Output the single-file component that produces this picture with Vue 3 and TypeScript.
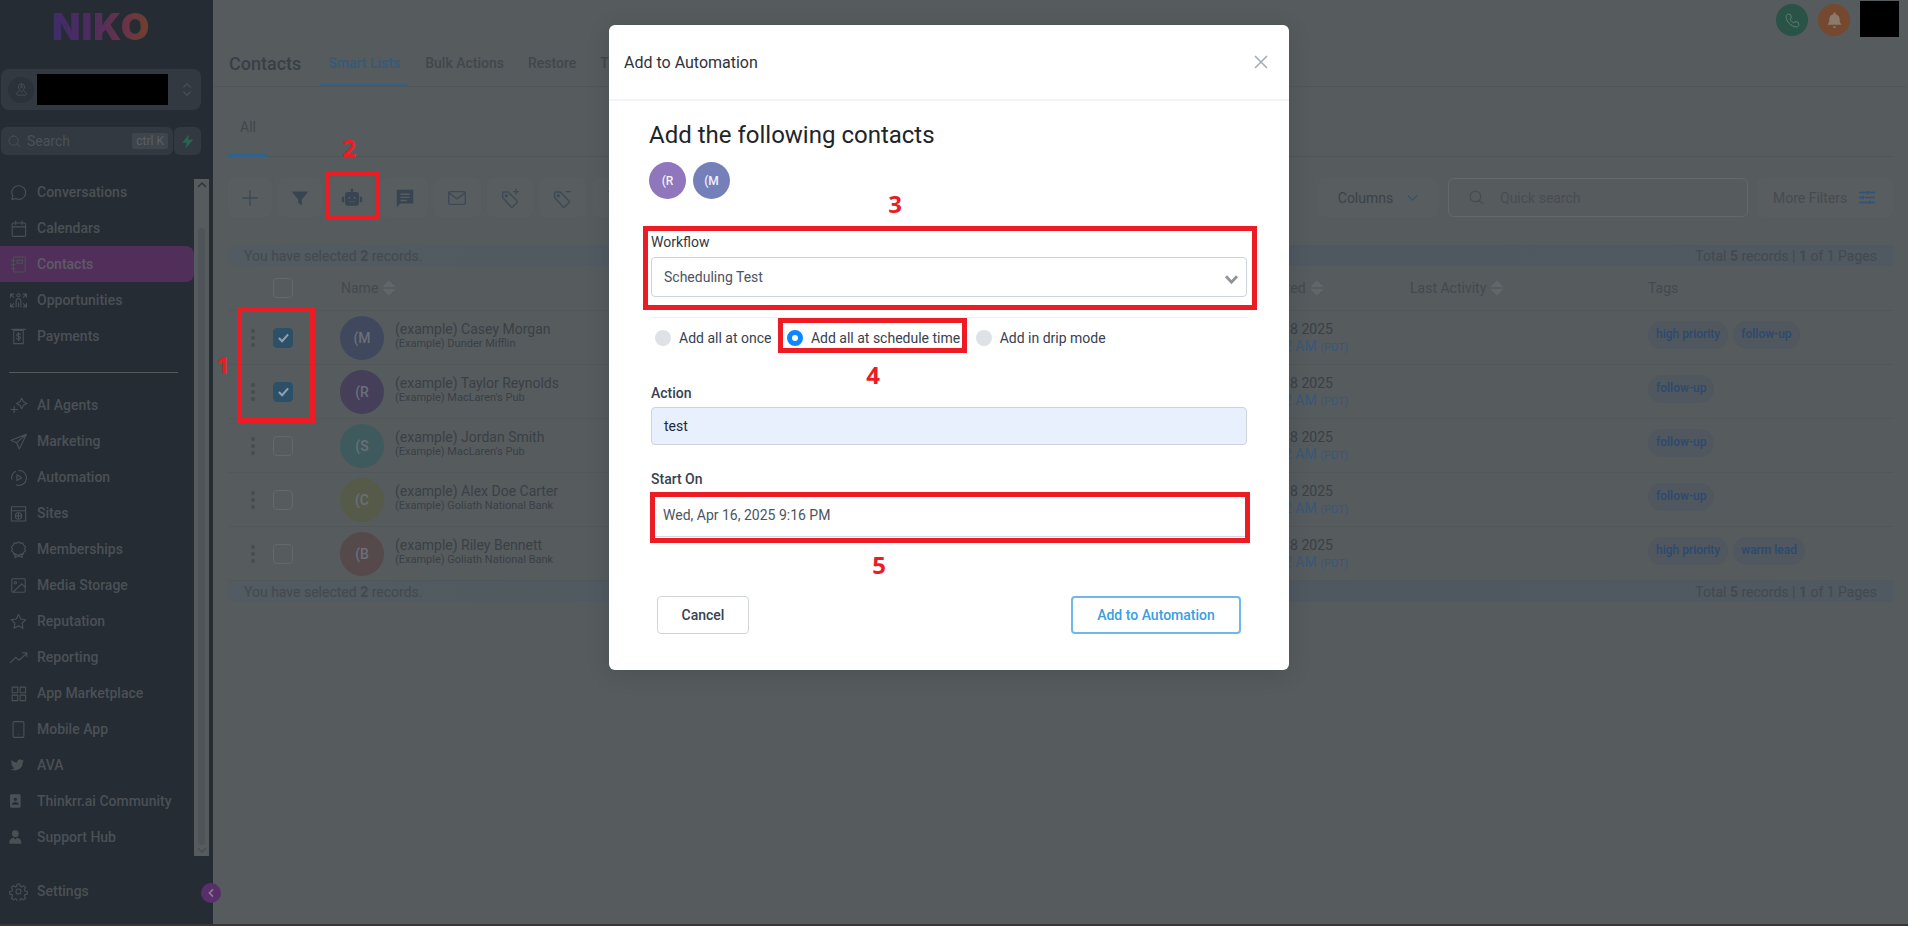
<script setup lang="ts">
type NavItem = { label: string; d: string; filled?: boolean; active?: boolean };

const navTop: NavItem[] = [
  { label: 'Conversations', d: 'M12.5 3.5a8.5 8.5 0 1 1-3.9 16L3.5 21l1.3-4.6A8.5 8.5 0 0 1 12.5 3.5z' },
  { label: 'Calendars', d: 'M5.5 5h14a1.5 1.5 0 0 1 1.5 1.5v14a1.5 1.5 0 0 1-1.5 1.5h-14A1.5 1.5 0 0 1 4 20.500v-14A1.500 1.500 0 0 1 5.500 5zM4 10h17M8.500 2.500V7M16.500 2.500V7' },
  { label: 'Contacts', active: true, d: 'M7 2.500h12a1.500 1.500 0 0 1 1.500 1.500v16a1.500 1.500 0 0 1-1.500 1.500H7A1.500 1.500 0 0 1 5.500 20V4A1.500 1.500 0 0 1 7 2.500zM3.500 7h4M3.500 12h4M3.500 17h4M10 6.500h7v4h-7z' },
  { label: 'Opportunities', d: 'M12 3.500a2 2 0 1 1 0 4 2 2 0 0 1 0-4zM9 20v-7.500a3 3 0 0 1 6 0V20M12 15v5M2 8V4h4M22 8V4h-4M2 16v4h4M22 16v4h-4M2.500 4.500 6 8M21.500 4.500 18 8M2.500 19.500 6 16M21.500 19.500 18 16' },
  { label: 'Payments', d: 'M6 4.500h12V21H6zM3.500 3h17M14.500 9.500c-.5-1-1.500-1.300-2.500-1.300-1.300 0-2.300.7-2.300 1.800 0 2.500 4.800 1.200 4.800 3.800 0 1.100-1.100 1.800-2.500 1.800-1.100 0-2.100-.4-2.600-1.400M12 7v10' },
];

const navMain: NavItem[] = [
  { label: 'AI Agents', d: 'M16 3l2.200 4.300L22.500 9.500l-4.300 2.200L16 16l-2.200-4.300L9.500 9.500l4.300-2.200zM6.500 13v8M2.500 17h8' },
  { label: 'Marketing', d: 'M22 3 2.500 10.500l7 3L13 21.500zM22 3 9.500 13.500' },
  { label: 'Automation', d: 'M12.500 3a9.500 9.500 0 1 1-3 18.500M3.500 14A9.500 9.500 0 0 1 8 4.500M10 8.500l6 3.700-6 3.700z' },
  { label: 'Sites', d: 'M3 3.500h18v18H3zM3 8.500h18M12 11a4 4 0 1 1 0 8 4 4 0 0 1 0-8zM8 15h8M12 11v8' },
  { label: 'Memberships', d: 'M12 2.500l2.500 1.500 3-.2 1 2.700 2.300 1.800-1 2.800 1 2.800-2.300 1.800-1 2.700-3-.2-2.500 1.500-2.500-1.500-3 .2-1-2.700-2.300-1.800 1-2.800-1-2.800 2.300-1.800 1-2.700 3 .2zM7.500 17v5l4.500-2 4.500 2v-5' },
  { label: 'Media Storage', d: 'M5 3.500h14A1.500 1.500 0 0 1 20.500 5v14a1.500 1.500 0 0 1-1.500 1.500H5A1.500 1.500 0 0 1 3.500 19V5A1.500 1.500 0 0 1 5 3.500zM8 7a1.500 1.500 0 1 1 0 3 1.500 1.500 0 0 1 0-3zM20.500 14.500 16 10 5 20.500' },
  { label: 'Reputation', d: 'M12 3l2.800 5.900 6.400.8-4.700 4.500 1.200 6.400-5.700-3.100-5.700 3.100 1.200-6.400L2.800 9.700l6.400-.8z' },
  { label: 'Reporting', d: 'M1.500 18.500l7-6.500 4.500 3.500 9.500-9M17 6h5.500v5' },
  { label: 'App Marketplace', d: 'M4 4h7v7H4zM14 4h7v7h-7zM4 14h7v7H4zM14 14h7v7h-7z' },
  { label: 'Mobile App', d: 'M7 2h10a1.800 1.800 0 0 1 1.800 1.800v16.400A1.800 1.800 0 0 1 17 22H7a1.800 1.800 0 0 1-1.800-1.800V3.800A1.800 1.800 0 0 1 7 2zM12 18h.1' },
  { label: 'AVA', filled: true, d: 'M24 5.500c-.8.400-1.500.6-2.400.7.900-.5 1.500-1.300 1.800-2.300-.8.500-1.700.8-2.600 1a4.100 4.100 0 0 0-7 3.700A11.600 11.600 0 0 1 5.300 4.400c-1.100 1.900-.5 4.300 1.300 5.500-.7 0-1.300-.2-1.900-.5 0 2 1.400 3.700 3.300 4.100-.6.200-1.200.2-1.800.1.500 1.600 2 2.800 3.800 2.800A8.300 8.300 0 0 1 4 18.100 11.600 11.600 0 0 0 21.900 8c.8-.6 1.500-1.500 2.100-2.500z' },
  { label: 'Thinkrr.ai Community', filled: true, d: 'M5 2h12a2 2 0 0 1 2 2v16a2 2 0 0 1-2 2H5a2 2 0 0 1-2-2V4a2 2 0 0 1 2-2zm6 5a2.500 2.500 0 1 0 0 5 2.500 2.500 0 0 0 0-5zm-5 10.500h10c0-2.500-2.500-4-5-4s-5 1.500-5 4z' },
  { label: 'Support Hub', filled: true, d: 'M11 2a5 5 0 1 1 0 10 5 5 0 0 1 0-10zM2 20c0-3.800 3-6.500 6.500-6.900l2.500 2.700 2.500-2.700c3.500.4 6.500 3.100 6.500 6.900v2H2z' },
];

const settingsIcon = 'M12 8.800a3.200 3.200 0 1 1 0 6.400 3.200 3.200 0 0 1 0-6.400zM10.300 2.500h3.400l.6 2.900 1.800.8 2.500-1.600 2.400 2.400-1.600 2.500.8 1.800 2.900.6v3.400l-2.900.6-.8 1.800 1.600 2.500-2.400 2.400-2.500-1.600-1.800.8-.6 2.900h-3.400l-.6-2.900-1.800-.8-2.500 1.600-2.400-2.400 1.600-2.500-.8-1.800-2.900-.6v-3.400l2.900-.6.800-1.800-1.600-2.500 2.400-2.400 2.500 1.600 1.800-.8z';

const tagBody = 'M4 6.500a1 1 0 0 1 1-1h5l9.500 9.500a1.500 1.500 0 0 1 0 2.100l-4.400 4.400a1.500 1.500 0 0 1-2.100 0L4 11.500zM8 8.500a1 1 0 1 1 0 2 1 1 0 0 1 0-2z';

const toolButtons = [
  { name: 'add', width: 44, d: 'M12 4v16M4 12h16' },
  { name: 'filter', width: 44, filled: true, d: 'M3 5h18l-7 8.500V20l-4-2.500v-4z' },
  { name: 'robot', width: 47, filled: true, d: 'M11 5.500V4.300a1.500 1.500 0 1 1 2 0v1.200h3.500a3 3 0 0 1 3 3v9a3 3 0 0 1-3 3h-9a3 3 0 0 1-3-3v-9a3 3 0 0 1 3-3zM9 10.500a1.200 1.200 0 1 0 0 2.400 1.200 1.200 0 0 0 0-2.400zm6 0a1.200 1.200 0 1 0 0 2.400 1.200 1.200 0 0 0 0-2.400zM9 15.500v1h1.500v-1zm2.300 0v1h1.400v-1zm2.200 0v1H15v-1zM1 10.500h2.500v6H1zm19.500 0H23v6h-2.500z' },
  { name: 'message', width: 47, filled: true, d: 'M3 3h18v15H7l-4 4zm4 4v1.600h10V7zm0 3.500v1.600h10v-1.600zm0 3.500v1.600h7V14z' },
  { name: 'mail', width: 46.5, d: 'M4.500 5h15A1.500 1.500 0 0 1 21 6.500v11a1.500 1.500 0 0 1-1.500 1.500h-15A1.500 1.500 0 0 1 3 17.500v-11A1.500 1.500 0 0 1 4.500 5zM3.500 6.500 12 13l8.500-6.500' },
  { name: 'tag-add', width: 46.5, d: tagBody + 'M18.500 2.500v5M16 5h5' },
  { name: 'tag-remove', width: 46.5, d: tagBody + 'M16.500 5h4.500' },
  { name: 'more', width: 46.5, d: 'M5 5h14' },
];

const rows = [
  { initial: '(M', color: '#40485e', name: '(example) Casey Morgan', company: '(Example) Dunder Mifflin', checked: true, tags: ['high priority', 'follow-up'] },
  { initial: '(R', color: '#463f59', name: '(example) Taylor Reynolds', company: "(Example) MacLaren's Pub", checked: true, tags: ['follow-up'] },
  { initial: '(S', color: '#3f5a5c', name: '(example) Jordan Smith', company: "(Example) MacLaren's Pub", checked: false, tags: ['follow-up'] },
  { initial: '(C', color: '#565a49', name: '(example) Alex Doe Carter', company: '(Example) Goliath National Bank', checked: false, tags: ['follow-up'] },
  { initial: '(B', color: '#55494c', name: '(example) Riley Bennett', company: '(Example) Goliath National Bank', checked: false, tags: ['high priority', 'warm lead'] },
];

const modalContacts = [
  { initial: '(R', color: '#8f76bd' },
  { initial: '(M', color: '#7580bb' },
];

const scheduleOptions = [
  { label: 'Add all at once', selected: false },
  { label: 'Add all at schedule time', selected: true },
  { label: 'Add in drip mode', selected: false },
];

// red callouts drawn on top of the screenshot
const callouts = [
  { left: 237, top: 307, width: 78, height: 116 },
  { left: 325, top: 171, width: 55, height: 49 },
  { left: 643, top: 226, width: 614, height: 84 },
  { left: 778, top: 318, width: 189, height: 35 },
  { left: 650, top: 492, width: 600, height: 51 },
];

const calloutNumbers = [
  { n: 1, x: 223, y: 365 },
  { n: 2, x: 349, y: 148 },
  { n: 3, x: 895, y: 204 },
  { n: 4, x: 873, y: 375 },
  { n: 5, x: 879, y: 565 },
];
</script>

<template>
  <div class="page">
    <aside class="sidebar">
      <div class="logo">NIKO</div>

      <div class="location">
        <span class="location-icon">
          <svg viewBox="0 0 24 24" width="15" height="15" class="line-icon">
            <path d="M12 3a5 5 0 0 1 5 5c0 3.500-5 8-5 8s-5-4.500-5-8a5 5 0 0 1 5-5zM12 6.500a1.500 1.500 0 1 1 0 3 1.500 1.500 0 0 1 0-3zM7.500 15 4 18.500 5.500 21h13l1.500-2.500-3.500-3.500" />
          </svg>
        </span>
        <span class="redacted location-name"></span>
        <svg viewBox="0 0 12 20" width="10" height="17" class="line-icon updown">
          <path d="M2 7l4-4 4 4M2 13l4 4 4-4" />
        </svg>
      </div>

      <div class="search-row">
        <div class="search-box">
          <svg viewBox="0 0 24 24" width="15" height="15" class="line-icon">
            <path d="M10.500 3a7.500 7.500 0 1 1 0 15 7.500 7.500 0 0 1 0-15zM16 16l5 5" />
          </svg>
          <span class="search-text">Search</span>
          <span class="kbd">ctrl K</span>
        </div>
        <div class="bolt-box">
          <svg viewBox="0 0 24 24" width="16" height="19"><path d="M14 1 3 14h7l-2 9 12-14h-8z" fill="#2a6350" /></svg>
        </div>
      </div>

      <div class="nav-wrap">
        <nav class="nav">
          <a v-for="item in navTop" :key="item.label" class="nav-item" :class="{ active: item.active }">
            <svg viewBox="0 0 24 24" width="19" height="19" class="line-icon nav-icon"><path :d="item.d" /></svg>
            <span>{{ item.label }}</span>
          </a>
          <div class="nav-divider"></div>
          <a v-for="item in navMain" :key="item.label" class="nav-item">
            <svg v-if="item.filled" viewBox="0 0 24 24" width="16" height="16" class="fill-icon nav-icon small"><path :d="item.d" /></svg>
            <svg v-else viewBox="0 0 24 24" width="19" height="19" class="line-icon nav-icon"><path :d="item.d" /></svg>
            <span>{{ item.label }}</span>
          </a>
        </nav>
        <div class="scrolltrack">
          <svg viewBox="0 0 10 6" width="10" height="6"><path d="M1 5l4-4 4 4" fill="none" stroke="#2f353b" stroke-width="1.500" /></svg>
          <div class="scrollthumb"></div>
          <svg viewBox="0 0 10 6" width="10" height="6"><path d="M1 1l4 4 4-4" fill="none" stroke="#484e52" stroke-width="1.500" /></svg>
        </div>
      </div>

      <a class="nav-item settings">
        <svg viewBox="0 0 24 24" width="19" height="19" class="line-icon nav-icon"><path :d="settingsIcon" /></svg>
        <span>Settings</span>
      </a>
      <span class="collapse">
        <svg viewBox="0 0 10 12" width="8" height="10"><path d="M7.500 1.500 3 6l4.500 4.500" fill="none" stroke="#8f7a98" stroke-width="2" /></svg>
      </span>
    </aside>

    <main class="main">
      <div class="topbar">
        <span class="round phone">
          <svg viewBox="0 0 24 24" width="17" height="17"><path d="M6 3l3.500 1 1 4.500-2 1.500c1 2.500 3 4.500 5.500 5.500l1.500-2 4.500 1 1 3.500c0 1.500-1.500 3-3 3C10 21 3 13.500 3 6c0-1.500 1.500-3 3-3z" fill="none" stroke="#5e7d70" stroke-width="1.400" /></svg>
        </span>
        <span class="round bell">
          <svg viewBox="0 0 24 24" width="19" height="19"><path d="M12 2a1.500 1.500 0 0 1 1.500 1.500v.7A6.500 6.500 0 0 1 18.500 10.500c0 4 1 5.500 2.500 7H3c1.500-1.500 2.500-3 2.500-7a6.500 6.500 0 0 1 5-6.300v-.7A1.500 1.500 0 0 1 12 2zM10 19.500h4a2 2 0 0 1-4 0z" fill="#8c7a6c" /></svg>
        </span>
        <span class="redacted avatar-block"></span>
      </div>

      <header class="page-header">
        <h1>Contacts</h1>
        <a class="tab active">Smart Lists</a>
        <a class="tab">Bulk Actions</a>
        <a class="tab">Restore</a>
        <a class="tab">T</a>
      </header>

      <div class="content">
        <div class="subtabs"><a class="subtab">All</a></div>

        <div class="toolbar">
          <div class="tools">
            <button v-for="tool in toolButtons" :key="tool.name" class="tool" :style="{ width: tool.width + 'px' }">
              <svg viewBox="0 0 24 24" width="22" height="22" :class="tool.filled ? 'tool-fill' : 'tool-line'"><path :d="tool.d" /></svg>
            </button>
          </div>
          <div class="toolbar-right">
            <button class="tool columns">
              <span>Columns</span>
              <svg viewBox="0 0 12 8" width="11" height="8"><path d="M1 1.500l5 5 5-5" fill="none" stroke="#34506b" stroke-width="1.200" /></svg>
            </button>
            <div class="quick-search">
              <svg viewBox="0 0 24 24" width="17" height="17" class="qs-icon"><path d="M10.500 3a7.500 7.500 0 1 1 0 15 7.500 7.500 0 0 1 0-15zM16 16l5 5" /></svg>
              <span>Quick search</span>
            </div>
            <button class="tool more-filters">
              <span>More Filters</span>
              <svg viewBox="0 0 16 15" width="16" height="15"><path d="M0 2.500h7M10.500 2.500H16M0 7.500h2M5.500 7.500H16M0 12.500h9M12.500 12.500H16" fill="none" stroke="#2c5478" stroke-width="1.500" /><path d="M7.500 1h2.500v3H7.500zM2.500 6H5v3H2.500zM9.500 11H12v3H9.500z" fill="#2c5478" /></svg>
            </button>
          </div>
        </div>

        <div class="sel-bar">
          <span>You have selected <b>2</b> records.</span>
          <span>Total <b>5</b> records | <b>1</b> of 1 Pages</span>
        </div>

        <div class="thead">
          <span class="check head-check"></span>
          <span class="th">Name <i class="sort"></i></span>
          <span class="th">Created <i class="sort"></i></span>
          <span class="th">Last Activity <i class="sort"></i></span>
          <span class="th">Tags</span>
        </div>

        <div v-for="row in rows" :key="row.name" class="trow">
          <span class="dots"><i></i><i></i><i></i></span>
          <span class="check" :class="{ checked: row.checked }">
            <svg v-if="row.checked" viewBox="0 0 14 12" width="13" height="11"><path d="M2 6.500 5.500 10 12 2.500" fill="none" stroke="#8fa1ae" stroke-width="2.200" /></svg>
          </span>
          <span class="avatar" :style="{ background: row.color }">{{ row.initial }}</span>
          <div class="who">
            <div class="who-name">{{ row.name }}</div>
            <div class="who-company">{{ row.company }}</div>
          </div>
          <div class="when">
            <div class="when-date">Apr 18 2025</div>
            <div class="when-time">04:22 AM <small>(PDT)</small></div>
          </div>
          <div class="tags">
            <span v-for="tag in row.tags" :key="tag" class="tag">{{ tag }}</span>
          </div>
        </div>

        <div class="sel-bar">
          <span>You have selected <b>2</b> records.</span>
          <span>Total <b>5</b> records | <b>1</b> of 1 Pages</span>
        </div>
      </div>
    </main>

    <div class="page-edge"></div>

    <section class="modal">
      <div class="modal-head">
        <span>Add to Automation</span>
        <svg viewBox="0 0 14 14" width="14" height="14"><path d="M1 1l12 12M13 1 1 13" fill="none" stroke="#a3abb3" stroke-width="1.500" /></svg>
      </div>
      <div class="modal-body">
        <h2>Add the following contacts</h2>
        <div class="chips">
          <span v-for="c in modalContacts" :key="c.initial" class="chip" :style="{ background: c.color }">{{ c.initial }}</span>
        </div>

        <label class="field-label workflow-label">Workflow</label>
        <div class="select-box">
          <span>Scheduling Test</span>
          <svg viewBox="0 0 16 12" width="15" height="11"><path d="M2 2.500l6 6.500 6-6.500" fill="none" stroke="#8f9499" stroke-width="3" /></svg>
        </div>
        <div class="modal-rule"></div>

        <div class="radios">
          <label v-for="opt in scheduleOptions" :key="opt.label" class="radio">
            <i class="radio-dot" :class="{ on: opt.selected }"></i>
            <span>{{ opt.label }}</span>
          </label>
        </div>

        <label class="field-label action-label">Action</label>
        <div class="text-input filled">test</div>

        <label class="field-label start-label">Start On</label>
        <div class="text-input date-input">Wed, Apr 16, 2025 9:16 PM</div>

        <div class="modal-actions">
          <button class="btn btn-cancel">Cancel</button>
          <button class="btn btn-add">Add to Automation</button>
        </div>
      </div>
    </section>

    <div
      v-for="(box, i) in callouts"
      :key="i"
      class="callout"
      :style="{ left: box.left + 'px', top: box.top + 'px', width: box.width + 'px', height: box.height + 'px' }"
    ></div>
    <span
      v-for="num in calloutNumbers"
      :key="num.n"
      class="callout-num"
      :style="{ left: num.x + 'px', top: num.y + 'px' }"
    >{{ num.n }}</span>
  </div>
</template>

<style>
html,
body {
  margin: 0;
  background: #565b5e;
}
</style>

<style scoped>
.page {
  position: relative;
  display: flex;
  width: 1908px;
  height: 926px;
  overflow: hidden;
  background: #565b5e;
  font-family: Roboto, "Liberation Sans", sans-serif;
  font-size: 14px;
}

/* sidebar */
.sidebar {
  position: relative;
  flex: 0 0 213px;
  display: flex;
  flex-direction: column;
  background: #252c34;
  color: #4b5055;
  box-sizing: border-box;
}
.logo {
  height: 30px;
  margin: 12px 0 27px 52px;
  font-family: Inter, sans-serif;
  font-size: 37px;
  font-weight: 900;
  line-height: 30px;
  letter-spacing: 1px;
  background: linear-gradient(90deg, #3d2d68 0%, #4f2c60 40%, #6a3446 75%, #6f4329 100%);
  -webkit-background-clip: text;
  background-clip: text;
  color: transparent;
  width: 100px;
}
.location {
  display: flex;
  align-items: center;
  width: 200px;
  height: 41px;
  margin-left: 1px;
  background: #323941;
  border-radius: 8px;
}
.location-icon {
  display: flex;
  align-items: center;
  justify-content: center;
  width: 26px;
  height: 26px;
  margin-left: 7px;
  border-radius: 50%;
  background: #2b323a;
}
.location-name {
  width: 131px;
  height: 31px;
  margin-left: 3px;
}
.updown {
  margin-left: 14px;
}
.redacted {
  display: block;
  background: #000;
}
.line-icon {
  fill: none;
  stroke: #4b5055;
  stroke-width: 1.400;
  stroke-linecap: round;
  stroke-linejoin: round;
}
.fill-icon {
  fill: #4b5055;
}
.search-row {
  display: flex;
  margin: 17px 0 0 1px;
  height: 28px;
  gap: 1px;
}
.search-box {
  display: flex;
  align-items: center;
  width: 172px;
  padding: 0 5px 0 6px;
  box-sizing: border-box;
  background: #323941;
  border-radius: 6px;
}
.search-text {
  flex: 1;
  margin-left: 5px;
  color: #4b5259;
}
.kbd {
  padding: 0 4px;
  height: 16px;
  line-height: 16px;
  font-size: 12px;
  background: #3e454c;
  border-radius: 2px;
  color: #5a6066;
}
.bolt-box {
  display: flex;
  align-items: center;
  justify-content: center;
  width: 27px;
  background: #323941;
  border-radius: 6px;
}
.nav-wrap {
  display: flex;
  height: 682px;
  margin-top: 19px;
}
.nav {
  width: 194px;
  flex: none;
}
.nav-item {
  display: flex;
  align-items: center;
  height: 36px;
  font-weight: 500;
  color: #4b5055;
}
.nav-item.active {
  background: #50305a;
  border-radius: 0 8px 8px 0;
  color: #5e5a66;
}
.nav-icon {
  flex: none;
  width: 19px;
  margin: 0 9px 0 9px;
}
.nav-icon.small {
  margin: 0 13px 0 8px;
  width: 16px;
}
.nav-divider {
  height: 1px;
  margin: 18px 16px 14px 9px;
  background: #565b5e;
}
.scrolltrack {
  display: flex;
  flex-direction: column;
  align-items: center;
  width: 15px;
  height: 677px;
  margin-top: 5px;
  padding: 3px 0;
  box-sizing: border-box;
  background: #565b5e;
}
.scrollthumb {
  flex: 1;
  width: 7px;
  margin: 40px 0 2px;
  border-radius: 4px;
  background: #4f5458;
}
.settings {
  margin-top: 17px;
}
.collapse {
  position: absolute;
  left: 201px;
  top: 883px;
  display: flex;
  align-items: center;
  justify-content: center;
  width: 20px;
  height: 20px;
  border-radius: 50%;
  background: #592f6b;
  z-index: 1;
}

/* main column */
.main {
  flex: 1;
  min-width: 0;
  display: flex;
  flex-direction: column;
}
.topbar {
  display: flex;
  align-items: flex-start;
  justify-content: flex-end;
  height: 40px;
  padding: 1px 9px 0 0;
  box-sizing: border-box;
}
.round {
  display: flex;
  align-items: center;
  justify-content: center;
  width: 32px;
  height: 32px;
  margin-top: 3px;
  margin-right: 10px;
  border-radius: 50%;
}
.phone {
  background: #295346;
}
.bell {
  background: #75492f;
}
.avatar-block {
  width: 39px;
  height: 36px;
}
.page-header {
  display: flex;
  align-items: center;
  height: 47px;
  padding-left: 16px;
  border-bottom: 1px solid #50555a;
  box-sizing: border-box;
}
.page-header h1 {
  margin: 0 27px 0 0;
  font-size: 18px;
  font-weight: 500;
  color: #393f46;
}
.tab {
  position: relative;
  margin-right: 24px;
  font-weight: 500;
  color: #42474c;
}
.tab.active {
  color: #365a78;
  margin-right: 25px;
}
.tab.active::after {
  content: "";
  position: absolute;
  left: -8px;
  right: -8px;
  bottom: -15px;
  height: 2px;
  background: #35607f;
}
.content {
  padding: 0 15px;
}
.subtabs {
  display: flex;
  height: 70px;
  border-bottom: 1px solid #50555a;
  box-sizing: border-box;
}
.subtab {
  width: 40px;
  height: 65px;
  margin-top: 1px;
  text-align: center;
  line-height: 78px;
  color: #42474c;
  border-bottom: 4px solid #33618a;
}
.toolbar {
  display: flex;
  justify-content: space-between;
  height: 39px;
  margin-top: 21px;
}
.tools,
.toolbar-right {
  display: flex;
  gap: 6px;
}
.tool {
  display: flex;
  align-items: center;
  justify-content: center;
  gap: 14px;
  height: 39px;
  padding: 0;
  border: 0;
  border-radius: 6px;
  background: #585d60;
  color: #3c4247;
  font: inherit;
}
.tool-line {
  fill: none;
  stroke: #3d4954;
  stroke-width: 1.500;
  stroke-linecap: round;
  stroke-linejoin: round;
}
.tool-fill {
  fill: #384451;
}
.columns {
  width: 120px;
  margin-right: 4px;
}
.quick-search {
  display: flex;
  align-items: center;
  width: 300px;
  height: 39px;
  padding-left: 19px;
  border: 1px solid #63686c;
  border-radius: 6px;
  box-sizing: border-box;
  color: #484d52;
}
.qs-icon {
  margin-right: 15px;
  fill: none;
  stroke: #484d52;
  stroke-width: 1.800;
}
.more-filters {
  width: 136px;
  margin-left: 3px;
  padding-left: 16px;
  justify-content: flex-start;
  gap: 12px;
  color: #464b50;
}
.sel-bar {
  display: flex;
  justify-content: space-between;
  align-items: center;
  height: 21px;
  margin-top: 28px;
  padding: 0 16px;
  background: linear-gradient(90deg, #525a62, #4f5860 60%, #505862);
  color: #43494e;
}
.trow + .sel-bar {
  margin-top: 0;
}
.sel-bar b {
  font-weight: 700;
}
.thead {
  display: grid;
  grid-template-columns: 45px 68px 916px 153px 238px 1fr;
  align-items: center;
  height: 45px;
  color: #44494e;
  border-bottom: 1px solid #52575a;
  box-sizing: border-box;
}
.thead .head-check {
  grid-column: 2;
}
.th {
  display: flex;
  align-items: center;
  gap: 5px;
}
.sort {
  display: block;
  width: 12px;
  height: 16px;
  background:
    linear-gradient(to top left, #60666a 50%, transparent 50%) left top / 50% 7px no-repeat,
    linear-gradient(to top right, #60666a 50%, transparent 50%) right top / 50% 7px no-repeat,
    linear-gradient(to bottom left, #60666a 50%, transparent 50%) left bottom / 50% 7px no-repeat,
    linear-gradient(to bottom right, #60666a 50%, transparent 50%) right bottom / 50% 7px no-repeat;
}
.trow {
  display: grid;
  grid-template-columns: 45px 67px 55px 862px 391px 1fr;
  align-items: center;
  height: 54px;
  border-bottom: 1px solid #52575a;
  box-sizing: border-box;
}
.dots {
  display: flex;
  flex-direction: column;
  gap: 3px;
  padding-left: 23px;
}
.dots i {
  display: block;
  width: 4px;
  height: 4px;
  border-radius: 50%;
  background: #474c50;
}
.check {
  display: flex;
  align-items: center;
  justify-content: center;
  width: 20px;
  height: 20px;
  border: 1px solid #63686c;
  border-radius: 4px;
  box-sizing: border-box;
}
.check.checked {
  background: #2c5068;
  border-color: #2c5068;
}
.avatar {
  display: flex;
  align-items: center;
  justify-content: center;
  width: 44px;
  height: 44px;
  margin-top: 1px;
  border-radius: 50%;
  color: #6a7079;
  font-weight: 500;
}
.who {
  padding-top: 8px;
}
.who-name {
  font-size: 14px;
  line-height: 16px;
  margin-top: -13px;
  color: #3a4046;
}
.who-company {
  font-size: 11px;
  line-height: 13px;
  color: #3a4046;
}
.when {
  margin-top: 2px;
}
.when-date {
  line-height: 17px;
  color: #3a4046;
}
.when-time {
  line-height: 17px;
  color: #385878;
  font-size: 14px;
}
.when-time small {
  font-size: 11px;
}
.tags {
  display: flex;
  gap: 5px;
  margin-top: -5px;
}
.tag {
  height: 28px;
  padding: 0 8px;
  line-height: 27px;
  border-radius: 14px;
  background: #50575f;
  color: #2b4a70;
  font-size: 12px;
  font-weight: 500;
}

/* strip at the very bottom of the window */
.page-edge {
  position: absolute;
  left: 0;
  right: 0;
  bottom: 0;
  height: 2px;
  background: #3a3530;
}

/* modal */
.modal {
  position: absolute;
  left: 609px;
  top: 25px;
  width: 680px;
  height: 645px;
  background: #fff;
  border-radius: 6px;
  box-shadow: 0 4px 24px rgba(0, 0, 0, 0.12);
  color: #212529;
}
.modal-head {
  display: flex;
  align-items: center;
  justify-content: space-between;
  height: 76px;
  padding: 0 21px 0 15px;
  border-bottom: 2px solid #f1f5f9;
  box-sizing: border-box;
  font-size: 16px;
  color: #2f3338;
}
.modal-body {
  padding: 20px 42px 0;
}
.modal-body h2 {
  margin: 0 0 0 -2px;
  font-size: 24px;
  font-weight: 400;
  line-height: 29px;
  color: #212529;
}
.chips {
  display: flex;
  gap: 7px;
  margin: 12px 0 0 -2px;
}
.chip {
  display: flex;
  align-items: center;
  justify-content: center;
  width: 37px;
  height: 37px;
  border-radius: 50%;
  color: #f4f1fa;
  font-size: 12px;
  font-weight: 500;
}
.field-label {
  display: block;
  line-height: 17px;
  color: #2f3640;
}
.workflow-label {
  margin-top: 35px;
}
.action-label,
.start-label {
  font-weight: 500;
  color: #374151;
}
.select-box {
  display: flex;
  align-items: center;
  justify-content: space-between;
  height: 40px;
  margin-top: 6px;
  padding: 0 7px 0 12px;
  border: 1px solid #cfd4da;
  border-radius: 4px;
  box-sizing: border-box;
  color: #4b5563;
}
.select-box svg {
  margin-top: 4px;
}
.modal-rule {
  height: 1px;
  margin-top: 20px;
  background: #eef1f4;
}
.radios {
  display: flex;
  height: 40px;
  align-items: center;
  padding-left: 4px;
}
.radio {
  display: flex;
  align-items: center;
  gap: 8px;
  margin-right: 15.500px;
  color: #374151;
}
.radio-dot {
  display: block;
  width: 16px;
  height: 16px;
  border-radius: 50%;
  background: #dee2e6;
  box-sizing: border-box;
}
.radio-dot.on {
  background: #fff;
  border: 5px solid #0d87ff;
}
.action-label {
  margin-top: 27px;
}
.text-input {
  display: flex;
  align-items: center;
  height: 38px;
  padding: 0 12px;
  border-radius: 4px;
  box-sizing: border-box;
  color: #4b5563;
}
.filled {
  margin-top: 5px;
  background: #e8f0fe;
  border: 1px solid #cfd4da;
  color: #1f2937;
}
.start-label {
  margin-top: 26px;
}
.date-input {
  height: 44px;
  margin-top: 5px;
  border-bottom: 1px solid #d6dae0;
}
.modal-actions {
  display: flex;
  justify-content: space-between;
  margin-top: 59px;
  padding: 0 6px;
}
.btn {
  height: 38px;
  border-radius: 4px;
  background: #fff;
  font: inherit;
  font-weight: 500;
}
.btn-cancel {
  width: 92px;
  border: 1px solid #d1d5db;
  color: #374151;
}
.btn-add {
  width: 170px;
  border: 2px solid #70b9e6;
  color: #38a0e0;
}

/* annotations */
.callout {
  position: absolute;
  border: 5px solid #ed1c24;
  box-sizing: border-box;
}
.callout-num {
  position: absolute;
  transform: translate(-50%, -50%);
  font-family: "Open Sans", sans-serif;
  font-size: 24px;
  font-weight: 700;
  line-height: 1;
  color: #ed1c24;
}
</style>
